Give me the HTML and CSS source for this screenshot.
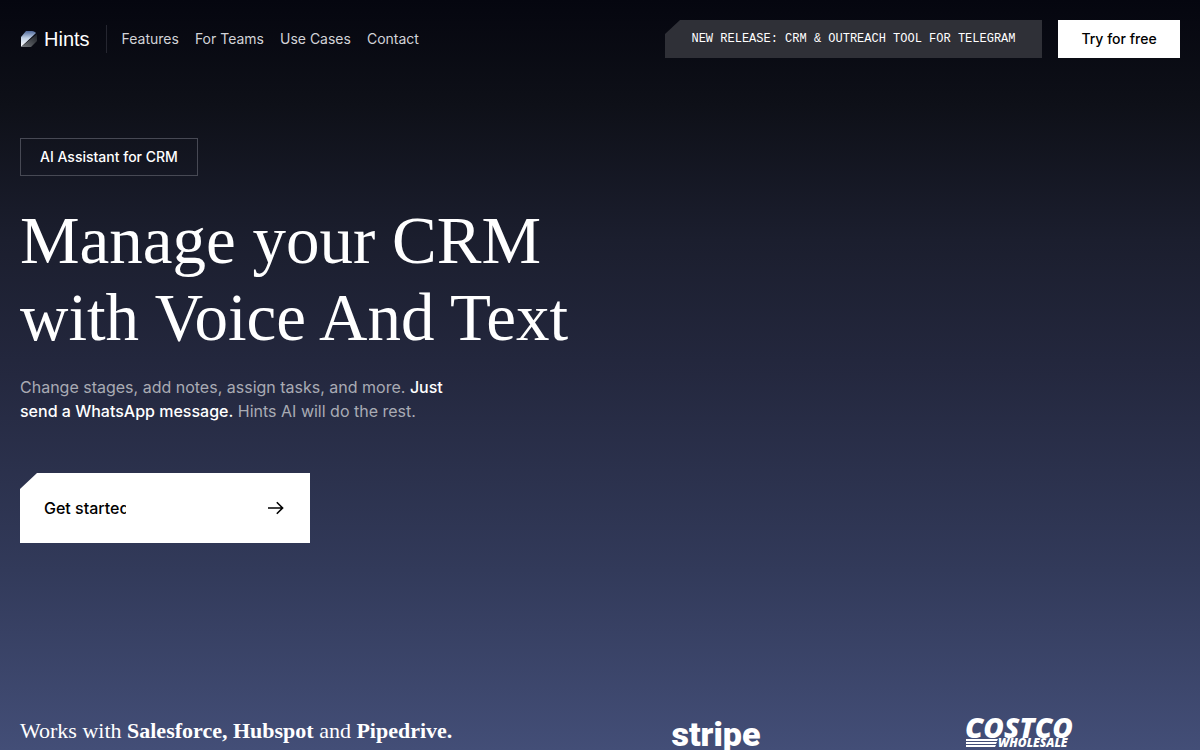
FILE: index.html
```html
<!DOCTYPE html>
<html lang="en">
<head>
  <meta charset="UTF-8" />
  <meta name="viewport" content="width=device-width, initial-scale=1" />
  <title>Hints - AI Assistant for CRM</title>
  <link rel="stylesheet" href="styles.css">
</head>

<body>

  <!-- Navigation -->
  <header class="header">
    <a class="logo" href="#">
      <svg width="18" height="18" viewBox="0 0 18 18" aria-hidden="true">
        <defs>
          <linearGradient id="logo-light" x1="0" y1="0" x2="0" y2="1">
            <stop offset="0" stop-color="#50699b" />
            <stop offset="0.45" stop-color="#c3d2e5" />
            <stop offset="1" stop-color="#ffffff" />
          </linearGradient>
          <linearGradient id="logo-dark" x1="0" y1="1" x2="1" y2="0">
            <stop offset="0" stop-color="#74787c" />
            <stop offset="1" stop-color="#1b1e24" />
          </linearGradient>
        </defs>
        <path d="M1 17V7L6 1H12C14 1 15 2 16 3Z" fill="url(#logo-light)" />
        <path d="M1 17L17 4V11L11 17Z" fill="url(#logo-dark)" />
      </svg>
      <span>Hints</span>
    </a>
    <nav class="nav-links">
      <a href="#features">Features</a>
      <a href="#teams">For Teams</a>
      <a href="#cases">Use Cases</a>
      <a href="#contact">Contact</a>
    </nav>
    <div class="header-actions">
      <a class="release" href="#telegram">NEW RELEASE: CRM &amp; OUTREACH TOOL FOR TELEGRAM</a>
      <a class="try-free" href="#try">Try for free</a>
    </div>
  </header>

  <!-- Hero -->
  <main class="hero">
    <div class="tag">AI Assistant for CRM</div>
    <h1>Manage your CRM<br>with Voice And Text</h1>
    <p class="intro">Change stages, add notes, assign tasks, and more. <strong>Just send a WhatsApp message.</strong> Hints AI will do the rest.</p>
    <button class="get-started" type="button">
      <span class="get-started-text">Get started</span>
      <svg width="16" height="14" viewBox="0 0 16 14" fill="none" stroke="#000" stroke-width="1.6" aria-hidden="true">
        <path d="M0 7H14.5M8.8 1.2L14.6 7L8.8 12.8" />
      </svg>
    </button>
  </main>

  <!-- Integrations and customers -->
  <section class="works-with">
    <p>Works with <strong>Salesforce, Hubspot</strong> and <strong>Pipedrive.</strong></p>
    <div class="brand stripe">stripe</div>
    <div class="brand">
      <svg class="costco" width="106" height="32" viewBox="0 0 106 32" role="img" aria-label="Costco Wholesale">
        <text x="0" y="21" class="costco-name"><tspan class="costco-cap">C</tspan>OSTCO</text>
        <path d="M1 22H33L32 24H1ZM1 25H32L31 27H1ZM1 28H31L30 30H1Z" fill="#fff" />
        <text x="33" y="30" class="costco-sub">WHOLESALE</text>
      </svg>
    </div>
  </section>

</body>
</html>
```

FILE: styles.css
```css
* {
  box-sizing: border-box;
}

body {
  margin: 0;
  height: 100vh;
  padding: 20px 20px 0;
  font-family: 'Inter', sans-serif;
  color: #fff;
  background: linear-gradient(#05060f 0%, #0e1018 14%, #1b1e2e 32%, #24283f 50%, #323a5a 76%, #434e77 100%) no-repeat;
  overflow: hidden;
}

a {
  color: inherit;
  text-decoration: none;
}

/* header */
.header {
  display: flex;
  align-items: center;
  height: 38px;
}

.logo {
  display: flex;
  align-items: center;
  gap: 6px;
  height: 28px;
  padding-right: 16px;
  border-right: 1px solid #252630;
  font-family: 'Liberation Sans', sans-serif;
  font-size: 20px;
}

.nav-links {
  display: flex;
  gap: 16px;
  padding-left: 15px;
  font-size: 14px;
  line-height: 20px;
  color: #d2d3d8;
}

.header-actions {
  display: flex;
  gap: 16px;
  margin-left: auto;
  text-align: center;
}

.release {
  min-width: 377px;
  height: 38px;
  padding: 0 20px;
  background: #2f3037;
  clip-path: polygon(15px 0, 100% 0, 100% 100%, 0 100%, 0 14px);
  font-family: 'Liberation Mono', monospace;
  font-size: 12px;
  line-height: 38px;
}

.try-free {
  min-width: 122px;
  height: 38px;
  padding: 0 20px;
  background: #fff;
  color: #000;
  font-size: 14px;
  font-weight: 500;
  line-height: 38px;
}

/* hero */
.hero {
  padding-top: 80px;
}

.tag {
  width: fit-content;
  padding: 0 19px;
  border: 1px solid #474954;
  font-size: 14px;
  font-weight: 500;
  line-height: 36px;
}

h1 {
  margin: 26px 0 0;
  font-family: 'Liberation Serif', serif;
  font-size: 67px;
  font-weight: 400;
  line-height: 77px;
}

.intro {
  max-width: 440px;
  margin: 19px 0 0;
  color: #a9abb4;
  font-size: 16px;
  line-height: 24px;
}

.intro strong {
  color: #fff;
  font-weight: 500;
}

.get-started {
  display: flex;
  align-items: center;
  justify-content: space-between;
  width: 290px;
  height: 70px;
  margin-top: 50px;
  padding: 0 26px 0 24px;
  border: none;
  background: #fff;
  clip-path: polygon(17px 0, 100% 0, 100% 100%, 0 100%, 0 16px);
  color: #000;
  font-family: 'Inter', sans-serif;
  font-size: 16px;
  font-weight: 500;
  line-height: 20px;
  cursor: pointer;
}

.get-started-text {
  width: 82px;
  overflow: hidden;
  text-align: left;
  white-space: nowrap;
}

/* customers */
.works-with {
  display: grid;
  grid-template-columns: 47% 26% 26%;
  margin-top: 172px;
}

.works-with p {
  margin: 0;
  font-family: 'Liberation Serif', serif;
  font-size: 22px;
  line-height: 32px;
}

.brand {
  display: flex;
  justify-content: center;
}

.stripe {
  font-family: 'Roboto', sans-serif;
  font-size: 34px;
  font-weight: 900;
  line-height: 38px;
}

.costco {
  margin-top: 2px;
  overflow: visible;
}

.costco text {
  fill: #fff;
  font-family: 'Open Sans', sans-serif;
  font-style: italic;
  font-weight: 800;
}

.costco .costco-name {
  font-size: 28px;
}

.costco .costco-cap {
  font-size: 29px;
}

.costco .costco-sub {
  font-size: 12px;
}
```
